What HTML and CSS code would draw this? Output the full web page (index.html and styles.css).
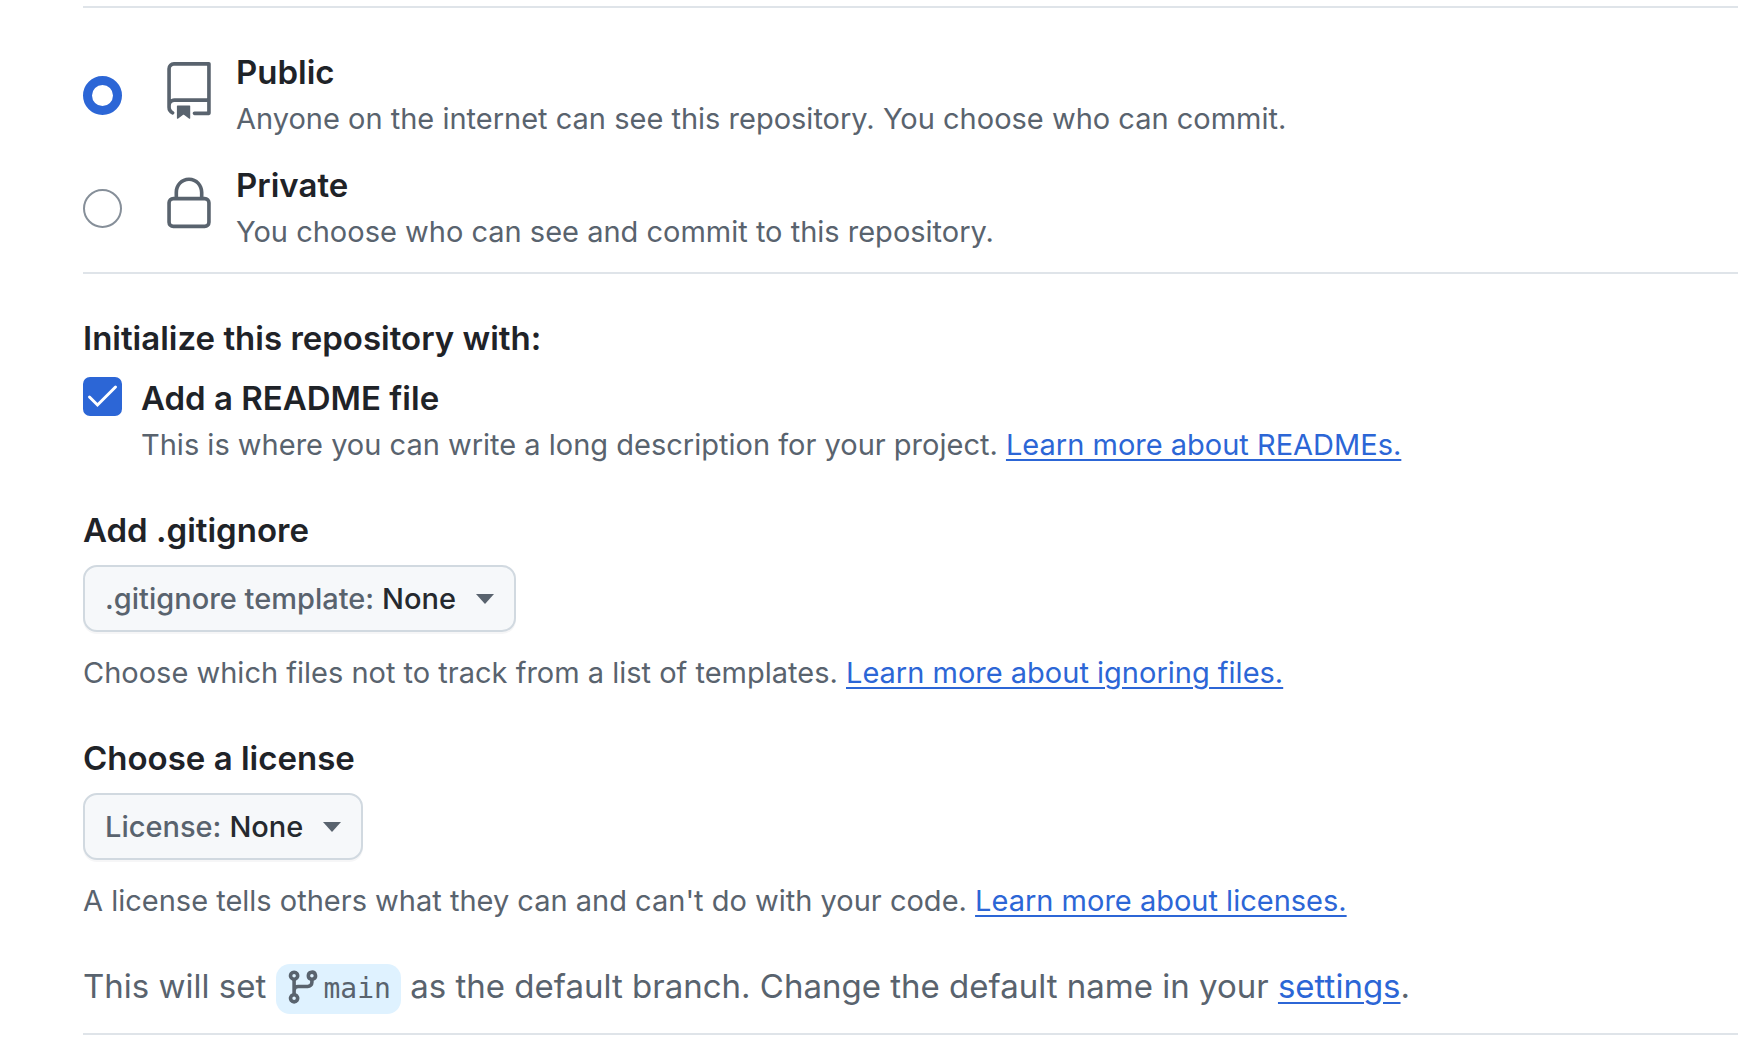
FILE: index.html
```html
<!DOCTYPE html>
<html lang="en">
<head>
<meta charset="utf-8">
<meta name="viewport" content="width=device-width, initial-scale=1">
<title>Create a new repository</title>
<link rel="stylesheet" href="styles.css">
</head>
<body>
<form class="new-repo">
  <section class="visibility" role="radiogroup" aria-label="Visibility">
    <div class="option">
      <input class="radio" type="radio" name="visibility" id="public" checked>
      <svg class="option-icon" viewBox="0 0 24 24" aria-hidden="true"><path fill-rule="evenodd" d="M3 2.75A2.75 2.75 0 015.75 0h14.5a.75.75 0 01.75.75v20.5a.75.75 0 01-.75.75h-6a.75.75 0 010-1.5h5.25v-4H6A1.5 1.5 0 004.5 18v.75c0 .716.43 1.334 1.05 1.605a.75.75 0 01-.6 1.374A3.25 3.25 0 013 18.75v-16zM19.500 1.500H5.750c-.69 0-1.25.56-1.25 1.250v12.651A2.987 2.987 0 016 15h13.500V1.500z"/><path d="M7 18.250a.25.25 0 01.25-.25h5a.25.25 0 01.25.25v5.010a.25.25 0 01-.397.201l-2.206-1.604a.25.25 0 00-.294 0L7.397 23.460a.25.25 0 01-.397-.2v-5.010z"/></svg>
      <div>
        <label class="title" for="public">Public</label>
        <p class="note">Anyone on the internet can see this repository. You choose who can commit.</p>
      </div>
    </div>
    <div class="option">
      <input class="radio" type="radio" name="visibility" id="private">
      <svg class="option-icon" viewBox="0 0 24 24" aria-hidden="true"><path fill-rule="evenodd" d="M6 9V7.250C6 3.845 8.503 1 12 1s6 2.845 6 6.250V9h.5a2.500 2.500 0 0 1 2.500 2.500v8a2.500 2.500 0 0 1-2.500 2.500h-13A2.500 2.500 0 0 1 3 19.500v-8A2.500 2.500 0 0 1 5.500 9Zm-1.500 2.500v8a1 1 0 0 0 1 1h13a1 1 0 0 0 1-1v-8a1 1 0 0 0-1-1h-13a1 1 0 0 0-1 1Zm3-4.250V9h9V7.250c0-2.670-1.922-4.750-4.500-4.750-2.578 0-4.500 2.080-4.500 4.750Z"/></svg>
      <div>
        <label class="title" for="private">Private</label>
        <p class="note">You choose who can see and commit to this repository.</p>
      </div>
    </div>
  </section>

  <section class="initialize">
    <div class="group">
      <h2 class="title">Initialize this repository with:</h2>
      <div class="readme">
        <span class="check">
          <input class="checkbox" type="checkbox" id="readme" checked>
          <svg class="tick" viewBox="0 0 39 39" aria-hidden="true"><path d="M6.500 20l8 8L32.500 10"/></svg>
        </span>
        <div>
          <label class="title" for="readme">Add a README file</label>
          <p class="note">This is where you can write a long description for your project. <a href="#readmes">Learn more about READMEs.</a></p>
        </div>
      </div>
    </div>

    <div class="group">
      <h2 class="title">Add .gitignore</h2>
      <div class="picker">
        <label for="gitignore">.gitignore template:</label>
        <select id="gitignore"><option>None</option></select>
        <svg class="caret" viewBox="0 0 18 10" aria-hidden="true"><path d="M0 0h18L9 10z"/></svg>
      </div>
      <p class="note">Choose which files not to track from a list of templates. <a href="#ignoring">Learn more about ignoring files.</a></p>
    </div>

    <div class="group">
      <h2 class="title">Choose a license</h2>
      <div class="picker">
        <label for="license">License:</label>
        <select id="license"><option>None</option></select>
        <svg class="caret" viewBox="0 0 18 10" aria-hidden="true"><path d="M0 0h18L9 10z"/></svg>
      </div>
      <p class="note">A license tells others what they can and can't do with your code. <a href="#licenses">Learn more about licenses.</a></p>
    </div>

    <p class="branch-note">This will set <span class="branch"><svg class="branch-icon" viewBox="0 0 16 16" aria-hidden="true"><path fill-rule="evenodd" d="M11.750 2.500a.75.75 0 100 1.500.75.75 0 000-1.500zm-2.250.75a2.250 2.250 0 113 2.122V6A2.500 2.500 0 0110 8.500H6a1 1 0 00-1 1v1.128a2.251 2.251 0 11-1.500 0V5.372a2.250 2.250 0 111.500 0v1.836A2.492 2.492 0 016 7h4a1 1 0 001-1v-.628A2.250 2.250 0 019.500 3.250zM4.250 12a.75.75 0 100 1.500.75.75 0 000-1.500zM3.500 3.250a.75.75 0 111.500 0 .75.75 0 01-1.500 0z"/></svg>main</span> as the default branch. Change the default name in your <a href="#settings">settings</a>.</p>
  </section>
</form>
</body>
</html>
```
FILE: styles.css
```css
:root {
  --text: #1f2328;
  --muted: #59636e;
  --accent: #2c66d6;
  --rule: #dfe4e9;
}

* {
  box-sizing: border-box;
}

body {
  margin: 0;
  background: #fff;
  color: var(--text);
  font-family: Inter, "Liberation Sans", sans-serif;
  font-size: 33px;
  line-height: 48px;
}

h2,
p {
  margin: 0;
}

a {
  color: var(--accent);
  text-decoration: underline;
  text-decoration-thickness: 2px;
  text-underline-offset: 4px;
}

svg {
  fill: var(--muted);
}

.new-repo {
  padding: 6px 0 0 83px;
}

.visibility {
  display: grid;
  gap: 19px;
  padding: 40px 0 17px;
  border-top: 2px solid var(--rule);
  border-bottom: 2px solid var(--rule);
}

.title {
  display: block;
  width: fit-content;
  font-size: 33px;
  font-weight: 600;
  line-height: 48px;
}

.note {
  color: var(--muted);
  font-size: 29px;
  line-height: 46px;
}

.option {
  display: flex;
  align-items: flex-start;
}

.radio,
.checkbox {
  appearance: none;
  flex: none;
  width: 39px;
  height: 39px;
  margin: 0;
}

.radio {
  margin-top: 28px;
  border: 2px solid #868f99;
  border-radius: 50%;
}

.radio:checked {
  border: 9px solid var(--accent);
}

.option-icon {
  flex: none;
  width: 58px;
  height: 58px;
  margin: 14px 18px 0 38px;
}

.initialize {
  padding: 40px 0 19px;
  border-bottom: 2px solid var(--rule);
}

.group {
  margin-bottom: 38px;
}

.readme {
  display: flex;
  gap: 19px;
  margin-top: 12px;
}

.check {
  display: grid;
  flex: none;
  align-self: flex-start;
  margin-top: 3px;
}

.checkbox,
.tick {
  grid-area: 1 / 1;
}

.checkbox {
  border: 2px solid #868f99;
  border-radius: 7px;
}

.checkbox:checked {
  border-color: var(--accent);
  background: var(--accent);
}

.tick {
  width: 39px;
  height: 39px;
  fill: none;
  stroke: #fff;
  stroke-width: 3;
  stroke-linecap: round;
  pointer-events: none;
}

.picker {
  display: flex;
  align-items: center;
  width: fit-content;
  height: 67px;
  margin: 11px 0 18px;
  padding: 0 20px;
  border: 2px solid #d1d9e0;
  border-radius: 14px;
  background: #f6f8fa;
  box-shadow: 0 2px 0 rgba(31, 35, 40, 0.04);
  color: var(--muted);
  font-size: 29px;
  font-weight: 500;
}

.picker select {
  appearance: none;
  margin: 0 0 0 8px;
  padding: 0;
  border: 0;
  background: none;
  color: #25292e;
  font: inherit;
}

.caret {
  width: 18px;
  height: 10px;
  margin-left: 20px;
}

.branch-note {
  color: var(--muted);
}

.branch {
  display: inline-flex;
  align-items: center;
  height: 50px;
  padding: 0 10px 0 8px;
  border-radius: 14px;
  background: #dff2ff;
  font-family: "DejaVu Sans Mono", monospace;
  font-size: 28px;
  vertical-align: middle;
}

.branch-icon {
  align-self: flex-start;
  width: 38px;
  height: 38px;
  margin: 4px 2px 0 0;
}
```
